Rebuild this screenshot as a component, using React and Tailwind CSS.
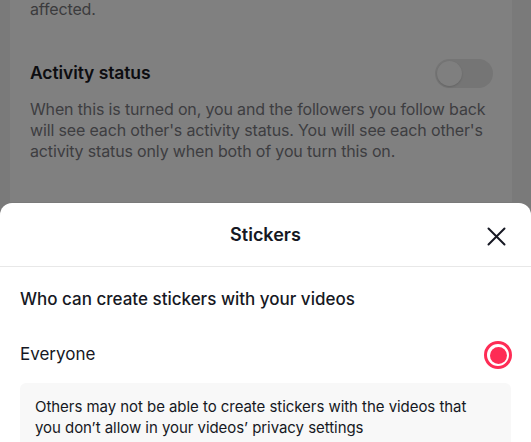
import React from "react";

export default function App() {
  const font = { fontFamily: "Inter, 'Liberation Sans', sans-serif" };
  return (
    <div className="w-[531px] h-[442px] overflow-hidden bg-[#7a7a7a] relative" style={font}>
      <div className="mx-[10px] w-[502px] h-[203px] bg-[#808080] px-[20px]">
        <div className="-mt-[1px] text-[16px] leading-[21px] text-[#3b3b3d] tracking-[-0.15px]">affected.</div>
        <div className="mt-[38px] flex items-center justify-between h-[30px]">
          <div className="text-[17.5px] font-semibold text-[#0d0d10] tracking-[-0.1px]">Activity status</div>
          <div className="mr-[-1px] w-[58px] h-[29px] rounded-full bg-[#757575] relative">
            <div className="absolute left-[2px] top-[2px] w-[25px] h-[25px] rounded-full bg-[#7f7f7f] shadow-[0_1px_2px_rgba(0,0,0,0.15)]" />
          </div>
        </div>
        <div className="mt-[11px] text-[16px] leading-[21px] text-[#3d3d40] tracking-[-0.15px]">
          When this is turned on, you and the followers you follow back will see each other's activity status. You will see each other's activity status only when both of you turn this on.
        </div>
      </div>
      <div className="absolute left-0 top-[203px] w-[531px] h-[260px] bg-white rounded-t-[12px]">
        <div className="h-[64px] flex items-center justify-center relative border-b border-[#e8e8e8]">
          <div className="text-[18px] font-semibold text-[#161823]">Stickers</div>
          <svg className="absolute right-[25px] top-[24px]" width="19" height="19" viewBox="0 0 19 19">
            <path d="M1.5 1.5 L17.5 17.5 M17.5 1.5 L1.5 17.5" stroke="#161823" strokeWidth="2" strokeLinecap="round" />
          </svg>
        </div>
        <div className="px-[20px]">
          <div className="mt-[21px] text-[17px] leading-[22px] font-medium text-[#161823]">Who can create stickers with your videos</div>
          <div className="mt-[29px] h-[32px] flex items-center justify-between">
            <div className="text-[17px] text-[#161823]">Everyone</div>
            <div className="w-[28px] h-[28px] rounded-full border-[3px] border-[#fe2c55] flex items-center justify-center mr-[-1px]">
              <div className="w-[17px] h-[17px] rounded-full bg-[#fe2c55]" />
            </div>
          </div>
          <div className="mt-[12px] rounded-[6px] bg-[#f8f8f8] px-[15px] pt-[13px] pb-[14px]">
            <div className="text-[15px] leading-[21px] text-[#161823] tracking-[-0.05px]">
              Others may not be able to create stickers with the videos that you don’t allow in your videos’ privacy settings
            </div>
          </div>
        </div>
      </div>
    </div>
  );
}
